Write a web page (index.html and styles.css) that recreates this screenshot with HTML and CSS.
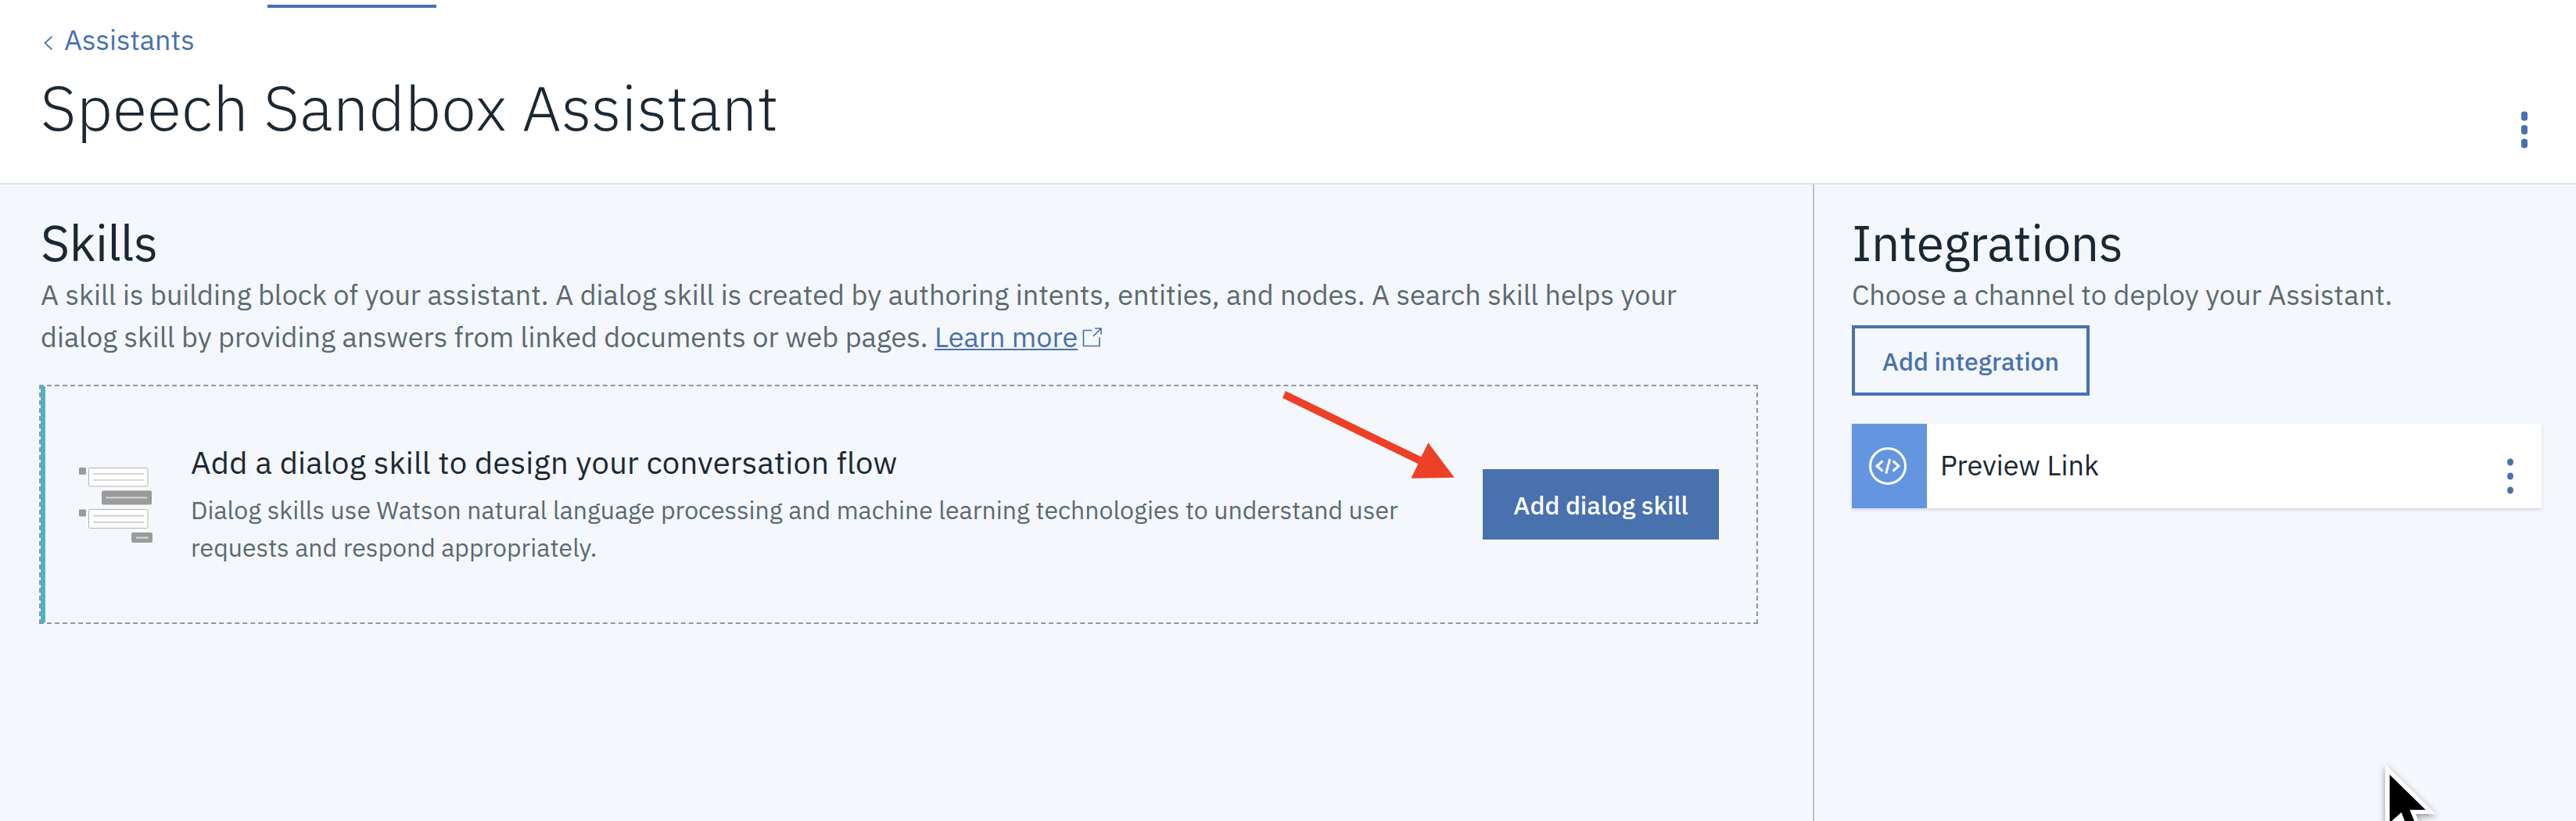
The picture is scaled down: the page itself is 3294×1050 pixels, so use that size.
FILE: index.html
```html
<!DOCTYPE html>
<html lang="en">
<head>
<meta charset="utf-8">
<title>Speech Sandbox Assistant</title>
<link rel="stylesheet" href="styles.css">
</head>
<body>
<header class="header">
  <div class="tab-indicator"></div>
  <a class="breadcrumb">
    <svg class="chevron" width="12" height="18" viewBox="0 0 12 18"><path d="M10.500 .7 1.500 9l9 8.300" fill="none" stroke="currentColor" stroke-width="1.800"/></svg>
    <span>Assistants</span>
  </a>
  <div class="title-row">
    <h1 class="title">Speech Sandbox Assistant</h1>
    <svg class="title-menu" width="8" height="48" viewBox="0 0 8 48"><g fill="currentColor"><rect y="0.500" width="8" height="12" rx="4" ry="3"/><rect y="18" width="8" height="12" rx="4" ry="3"/><rect y="35.500" width="8" height="12" rx="4" ry="3"/></g></svg>
  </div>
</header>
<main class="content">
  <section class="skills">
    <h2 class="heading">Skills</h2>
    <p class="lead">A skill is building block of your assistant. A dialog skill is created by authoring intents, entities, and nodes. A search skill helps your<br>dialog skill by providing answers from linked documents or web pages. <a class="link">Learn more</a><svg class="external" width="25" height="25" viewBox="0 0 25 25"><path d="M12.500 3.500H1.500v20h20.500V12.500M16 1h8v8M23.500 1.500 14 11" fill="none" stroke="currentColor" stroke-width="1.700"/></svg></p>
    <div class="skill-card">
      <svg class="dialog-icon" width="96" height="98" viewBox="0 0 96 98">
        <g fill="#9b9b9b">
          <rect x="1" y="1" width="9" height="9" rx="1"/>
          <rect x="1" y="54.500" width="9" height="9" rx="1"/>
          <rect x="30" y="30.500" width="64" height="18" rx="2"/>
          <rect x="68" y="84" width="27" height="13" rx="2"/>
        </g>
        <g fill="#fff" stroke="#b4b4b4">
          <rect x="13.500" y="1.500" width="75.500" height="23.500" rx="1.500"/>
          <rect x="13.500" y="54.500" width="75.500" height="24" rx="1.500"/>
        </g>
        <path d="M20 9h63M20 17h63M36.500 39.500h51M20 62.700h63M20 70.800h63M75 90.700h14" stroke="#d6d6d6" stroke-width="2.200" stroke-linecap="round"/>
      </svg>
      <div class="skill-text">
        <h3 class="skill-title">Add a dialog skill to design your conversation flow</h3>
        <p class="skill-desc">Dialog skills use Watson natural language processing and machine learning technologies to understand user<br>requests and respond appropriately.</p>
      </div>
      <button class="btn btn-primary">Add dialog skill</button>
    </div>
  </section>
  <aside class="integrations">
    <h2 class="heading">Integrations</h2>
    <p class="lead">Choose a channel to deploy your Assistant.</p>
    <button class="btn btn-outline">Add integration</button>
    <div class="integration-card">
      <div class="integration-icon">
        <svg width="48" height="48" viewBox="0 0 48 48" fill="none" stroke="#fff" stroke-width="3"><circle cx="24" cy="24" r="22.500"/><path d="M17.500 17.500 10 24l7.500 6.500M30.500 17.500 38 24l-7.500 6.500M26.700 15l-5 18.500"/></svg>
      </div>
      <span class="integration-name">Preview Link</span>
      <svg class="card-menu" width="8" height="46" viewBox="0 0 8 46"><g fill="currentColor"><ellipse cx="4" cy="5" rx="4" ry="4.500"/><ellipse cx="4" cy="23" rx="4" ry="4.500"/><ellipse cx="4" cy="41" rx="4" ry="4.500"/></g></svg>
    </div>
  </aside>
</main>
<svg class="arrow" width="222" height="114" viewBox="1639 499 222 114"><path d="M1643.800 500 1817.400 584.300 1826.300 566.300 1859.800 610.700 1804.500 611.700 1813.400 593.300 1640 509z" fill="#ed4026"/></svg>
<svg class="cursor" width="94" height="80" viewBox="3030 970 94 80"><path class="cursor-edge" d="M3050 977.300 3115 1041H3089L3095 1056H3050z" fill="#fff"/><path d="M3055.700 990.700 3101.700 1035.700H3081.300L3087.300 1050H3075L3070.700 1039 3058.300 1050H3055.700z"/></svg>
</body>
</html>
```

FILE: styles.css
```css
* { box-sizing: border-box; }

body {
  margin: 0;
  height: 1050px;
  overflow: hidden;
  position: relative;
  display: flex;
  flex-direction: column;
  background: #f4f7fc;
  color: #1b2833;
  font-family: "IBM Plex Sans", Roboto, sans-serif;
}

h1, h2, h3, p { margin: 0; font-weight: 400; }
svg { flex: none; }

.header {
  height: 236px;
  padding-top: 6px;
  background: #fff;
  border-bottom: 2px solid #dfe4e7;
}

.tab-indicator {
  width: 216px;
  height: 4px;
  margin-left: 342px;
  background: #4971ae;
}

.breadcrumb {
  display: flex;
  align-items: center;
  gap: 14px;
  margin: 21px 0 18px 56px;
  color: #4971ae;
  font-size: 36px;
  line-height: 40px;
}

.chevron { margin-top: 8px; }

.title-row {
  display: flex;
  align-items: flex-start;
  justify-content: space-between;
  padding: 0 62px 0 52px;
}

.title {
  font-size: 80px;
  font-weight: 300;
  line-height: 96px;
  letter-spacing: 0.5px;
}

.title-menu { margin-top: 53px; color: #4971ae; }

.content { flex: 1; display: flex; }

.skills {
  width: 2320px;
  padding: 35px 70px 0 52px;
  border-right: 2px solid #bdc0c3;
}

.integrations { flex: 1; padding: 35px 44px 0 48px; }

.heading {
  margin-bottom: 1px;
  font-size: 64px;
  line-height: 78px;
  letter-spacing: -0.5px;
}

.lead {
  color: #5c6970;
  font-size: 36px;
  line-height: 54px;
  white-space: nowrap;
}

.link {
  color: #4971ae;
  text-decoration: underline 2px;
  text-underline-offset: 2px;
  text-decoration-skip-ink: none;
}

.external { margin-left: 6px; color: #4971ae; vertical-align: baseline; }

.skill-card {
  display: flex;
  align-items: center;
  height: 306px;
  margin: 34px 0 0 -2px;
  padding: 0 48px;
  border: 2px dashed #8c9ba5;
  box-shadow: inset 6px 0 #4fb1c6;
}

.dialog-icon { margin-top: 2px; }

.skill-text {
  flex: 1;
  margin-left: 48px;
  padding-bottom: 3px;
  white-space: nowrap;
}

.skill-title {
  margin-bottom: 9px;
  font-size: 40px;
  line-height: 56px;
  letter-spacing: 0.23px;
}

.skill-desc {
  color: #5c6970;
  font-size: 32px;
  line-height: 48px;
  letter-spacing: 0.01px;
}

.btn {
  display: block;
  height: 90px;
  padding: 2px 0 0;
  font-family: inherit;
  font-size: 32px;
  font-weight: 500;
}

.btn-primary {
  width: 302px;
  border: 0;
  background: #4971ae;
  color: #fff;
}

.btn-outline {
  width: 304px;
  margin-top: 12px;
  border: 4px solid #4971ae;
  background: transparent;
  color: #4971ae;
}

.integration-card {
  display: flex;
  align-items: center;
  height: 108px;
  margin-top: 36px;
  padding-right: 36px;
  background: #fff;
  box-shadow: 0 2px 4px rgba(0, 0, 0, 0.14);
}

.integration-icon {
  display: flex;
  align-items: center;
  width: 96px;
  height: 108px;
  padding-left: 22px;
  background: #6495e0;
}

.integration-name {
  flex: 1;
  margin-left: 17px;
  padding-bottom: 3px;
  font-size: 36px;
}

.card-menu { margin-top: 26px; color: #4971ae; }

.arrow { position: absolute; left: 1639px; top: 499px; }
.cursor { position: absolute; left: 3030px; top: 970px; overflow: hidden; }
.cursor-edge { filter: drop-shadow(0 3px 4px rgba(0, 0, 0, 0.4)); }
```
